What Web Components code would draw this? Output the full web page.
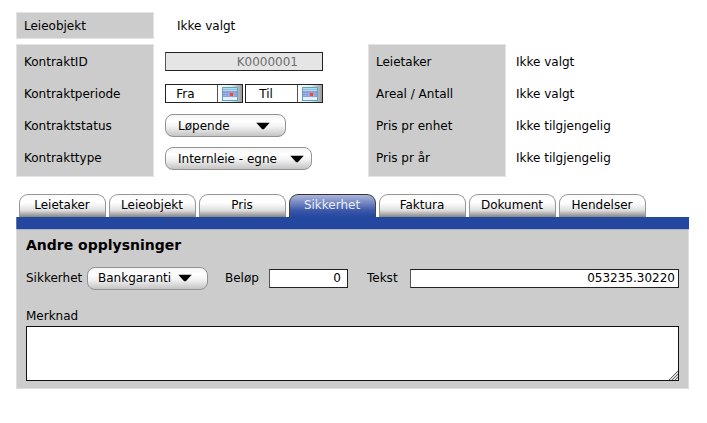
<!DOCTYPE html>
<html lang="no">
<head>
<meta charset="utf-8">
<title>Kontrakt</title>
<style>
html,body{margin:0;background:#fff}
body{width:707px;height:423px;overflow:hidden;font:12px/16px "DejaVu Sans",sans-serif;color:#000}
</style>
</head>
<body>
<contract-page></contract-page>
<script>
const define = (name, html, setup) => customElements.define(name, class extends HTMLElement {
  connectedCallback() {
    if (this.shadowRoot) return;
    const t = document.createElement('template');
    t.innerHTML = '<style>*{box-sizing:border-box}:host{box-sizing:border-box}</style>' + html;
    this.attachShadow({mode: 'open'}).append(t.content.cloneNode(true));
    if (setup) setup(this, this.shadowRoot);
  }
});

define('label-panel', `<style>
:host{display:block;width:138px;background:#ccc;border:1px solid #e3e3e3;padding:1px 0 0 7px}
::slotted(div){height:32px;line-height:32px;white-space:nowrap}
</style><slot></slot>`);

define('value-text', `<style>
:host{display:block;height:32px;line-height:32px;white-space:nowrap}
</style><slot></slot>`);

define('text-box', `<style>
:host{display:block;height:19px;background:#fff;border:1px solid #000;border-color:#222 #222 #222 #555;line-height:17px;text-align:right;padding-right:6px;white-space:nowrap}
:host([readonly]){background:#e5e5e5;color:#6e6e6e;padding-right:24px;line-height:18px}
:host([wide]){padding-right:3px}
</style><slot></slot>`);

define('date-box', `<style>
:host{display:flex;width:78px;height:19px;background:#fff;border:1px solid #222;line-height:18px}
span{flex:1;text-align:center;padding-right:12px}
:host([end]) span{padding-right:11px}
i{width:25px;border-left:1px solid #555;background:linear-gradient(90deg,#fff,#e8e8e8 55%,#999);display:flex;align-items:center;justify-content:center}
svg{display:block}
</style><span><slot></slot></span><i><svg width="16" height="14" viewBox="0 0 16 14">
<rect x=".5" y=".5" width="15" height="13" fill="#e3f2f8" stroke="#58a5cb"/>
<path d="M1 2.5h14" stroke="#86c4df" stroke-width="2"/>
<path d="M1 4h14v6H1z" fill="#8c9bd3"/>
<path d="M1 6.5h14M1 8.5h14M3.5 4v6M6.5 4v6M9.5 4v6M12.5 4v6" stroke="#a9b5e2" stroke-width=".5"/>
<rect x="8" y="6" width="3" height="3" fill="#f04b38"/></svg></i>`);

define('drop-down', `<style>
:host{display:flex;align-items:center;justify-content:space-between;height:23px;border:1px solid #93938f;border-radius:8px;background:linear-gradient(#f4f4f4,#fff 30%,#f3f3f3 55%,#c4c4c4);padding:0 7px 0 12px;white-space:nowrap}
:host([status]){padding-right:15px}
:host([bank]){padding:0 15px 0 10px}
svg{display:block}
</style><slot></slot><svg width="14" height="8" viewBox="0 0 14 8"><path d="M.3 .7h13.4L8.3 6.7Q7 7.9 5.7 6.7z"/></svg>`);

define('tab-button', `<style>
:host{display:block;width:87px;height:23px;border:1px solid #969696;border-bottom:0;border-radius:9px 9px 0 0;background:linear-gradient(#fafafa,#fff 35%,#dedede 70%,#858585);line-height:21px;text-align:center;padding-right:1px}
:host([selected]){border-color:#333 #444;background:linear-gradient(#aab6dc,#7688c2 35%,#3c58a9 70%,#2447a0);color:#e9edf8}
</style><slot></slot>`);

define('text-zone', `<style>
:host{display:flex;align-items:flex-end;justify-content:flex-end;height:55px;background:#fff;border:1px solid #111}
svg{display:block}
</style><svg width="10" height="10" viewBox="0 0 10 10"><path d="M10 0V10H0z" fill="#ddd"/><path d="M1 10L10 1M4 10L10 4M7 10L10 7" stroke="#666" stroke-width="1"/></svg>`);

define('contract-page', `<style>
:host{display:block;padding:12px 18px 0 16px}
.first{display:flex;gap:23px;height:27px;margin-bottom:5px}
.first label-panel{height:27px}
.first label-panel div{height:25px;line-height:25px}
.first value-text{height:27px;line-height:28px}
.info{display:flex;height:133px}
.tall{height:133px}
.fields{width:214px;padding:8px 0 0 11px}
.dates{display:flex;gap:2px;margin:13px 0 11px}
.values{padding:2px 0 0 10px}
.tabs{display:flex;gap:3px;padding-left:3px;margin-top:17px;height:23px}
.bar{height:12px;background:#2447a0;width:673px;border-left:1px solid #5c76b8}
.body{width:673px;height:160px;background:#ccc;border:1px solid #dedede;border-top:1px solid #a9b3ca;padding:0 9px}
h2{font-size:14px;line-height:18px;margin:6px 0 0}
.line{display:flex;align-items:center;height:24px;margin-top:12px}
.note{line-height:16px;margin:18px 0 2px}
</style>
<div class="first"><label-panel><div>Leieobjekt</div></label-panel><value-text>Ikke valgt</value-text></div>
<div class="info">
<label-panel class="tall"><div>KontraktID</div><div>Kontraktperiode</div><div>Kontraktstatus</div><div>Kontrakttype</div></label-panel>
<div class="fields">
<text-box readonly style="width:158px">K0000001</text-box>
<div class="dates"><date-box>Fra</date-box><date-box end>Til</date-box></div>
<drop-down status style="width:121px">Løpende</drop-down>
<drop-down style="width:147px;margin-top:10px">Internleie - egne</drop-down>
</div>
<label-panel class="tall"><div>Leietaker</div><div>Areal / Antall</div><div>Pris pr enhet</div><div>Pris pr år</div></label-panel>
<div class="values"><value-text>Ikke valgt</value-text><value-text>Ikke valgt</value-text><value-text>Ikke tilgjengelig</value-text><value-text>Ikke tilgjengelig</value-text></div>
</div>
<div class="tabs"><tab-button>Leietaker</tab-button><tab-button>Leieobjekt</tab-button><tab-button>Pris</tab-button><tab-button selected>Sikkerhet</tab-button><tab-button>Faktura</tab-button><tab-button>Dokument</tab-button><tab-button>Hendelser</tab-button></div>
<div class="bar"></div>
<div class="body">
<h2>Andre opplysninger</h2>
<div class="line"><span style="width:61px">Sikkerhet</span><drop-down bank style="width:121px">Bankgaranti</drop-down><span style="width:44px;margin-left:17px">Beløp</span><text-box style="width:79px">0</text-box><span style="width:43px;margin-left:19px">Tekst</span><text-box wide style="width:269px">053235.30220</text-box></div>
<div class="note">Merknad</div>
<text-zone></text-zone>
</div>`);
</script>
</body>
</html>
